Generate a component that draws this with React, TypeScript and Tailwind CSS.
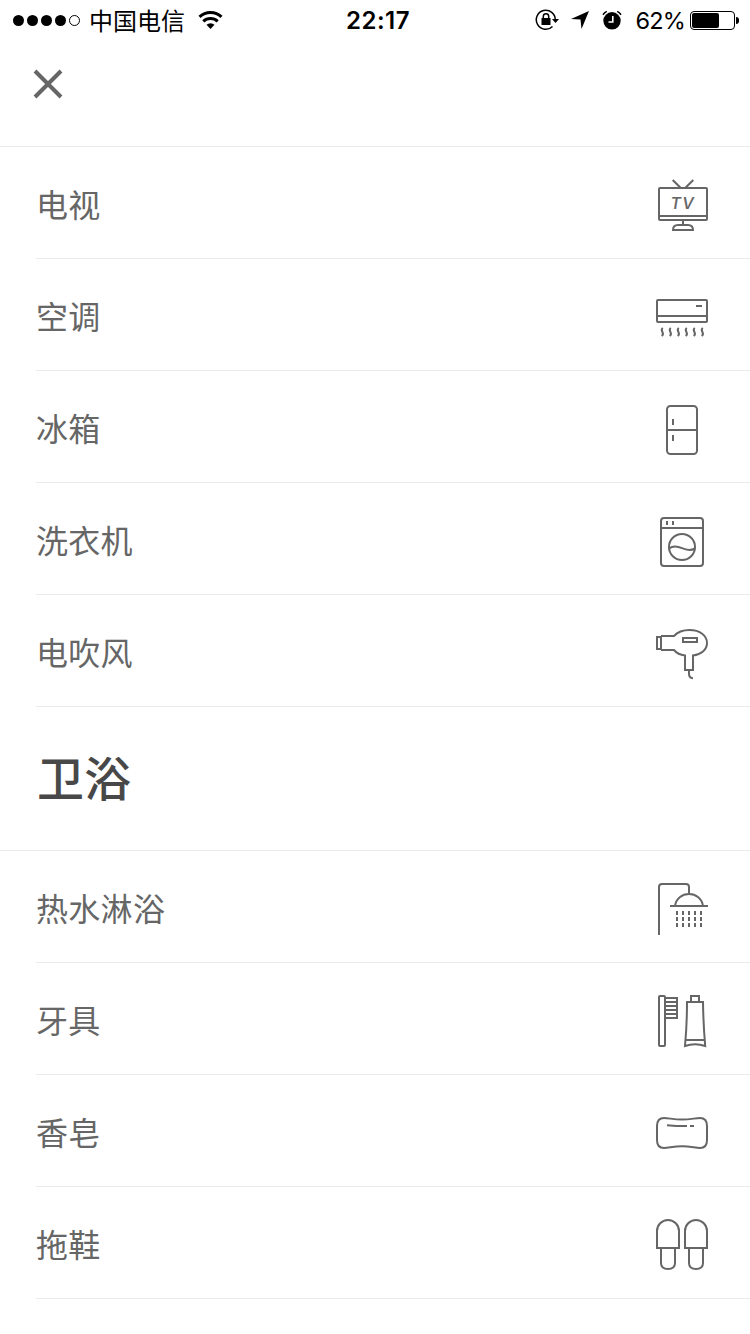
import React from 'react';

type Item = { label: string; icon: React.ReactNode };

const TvIcon = () => (
  <>
    <path d="M20.700 8l8.100 8M41.300 8l-8.100 8" />
    <rect x="7" y="16" width="48" height="32" rx="1" />
    <path d="M7 44h48M31 48v5" />
    <path d="M21 58c0-3 2-5 5-5h10c3 0 5 2 5 5z" />
    <text x="18.600" y="37" fontSize="16" fontStyle="italic" fontWeight="500" letterSpacing="1.300" fill="#666" stroke="#666" strokeWidth="0.200">
      TV
    </text>
  </>
);

const AirConditionerIcon = () => (
  <>
    <rect x="5" y="16" width="50" height="22" rx="1" />
    <path d="M5 32h50M44 22h6" />
    {[10, 18, 26, 34, 42, 50].map((x) => (
      <path key={x} d={`M${x + 0.8} 44c-1.400 1-1.300 2.400-.4 4s.7 3-.7 4`} />
    ))}
  </>
);

const FridgeIcon = () => (
  <>
    <rect x="15" y="10" width="30" height="48" rx="3.500" />
    <path d="M15 34h30M21 23v6M21 39v6" />
  </>
);

const WasherIcon = () => (
  <>
    <rect x="9" y="10" width="42" height="48" rx="3" />
    <path d="M9 20h42M15 13v4M21 13v4" />
    <circle cx="30" cy="39" r="13" />
    <path d="M17 40.500c4-3 8-2.500 13-.3s9 2.400 13 .3" />
  </>
);

const HairDryerIcon = () => (
  <>
    <rect x="5" y="17" width="4" height="12" />
    <path d="M9 16h13c4-4.500 9-6 15.500-6C48 10 55 15.500 55 23c0 7-6 11.500-14 12.500V50h-8V35.500c-4.500-.6-8.500-2.500-11-5.500H9" />
    <rect x="31" y="18" width="14" height="4" />
    <path d="M37 50v4c0 3 1.500 4 4 4.200" />
  </>
);

const ShowerIcon = () => (
  <>
    <path d="M7 59V11c0-2 1-3 3-3h24c2 0 3 1 3 3v7" />
    <path d="M23 30c1-7.500 7-12 14-12s13 4.500 14 12M18 30h38" />
    {[25, 31, 37, 43, 49].map((x) => (
      <path key={x} d={`M${x} 35v4m0 2v4m0 2v4`} />
    ))}
  </>
);

const ToothbrushIcon = () => (
  <>
    <rect x="7" y="8" width="6" height="50" rx="1" />
    <path d="M13 10h12v20H13M13 14h12M13 18h12M13 22h12M13 26h12" />
    <path d="M39 14V8h8v6" />
    <path d="M35 14h16c.2 16 1 30 2.200 44-6-2-14.400-2-20.200 0 1.300-14 2-28 2-44zM34 52h18" />
  </>
);

const SoapIcon = () => (
  <>
    <path d="M5 26c0-5 2.500-8 7-8 5 0 9 1.600 18 1.600S43 18 48 18c4.500 0 7 3 7 8v14c0 5-2.500 8-7 8-5 0-9-1.800-18-1.800S17 48 12 48c-4.500 0-7-3-7-8z" />
    <path d="M15 25.200c7 .7 12 .9 20 .9M38 26h4" />
  </>
);

const SlippersIcon = () => (
  <>
    <path d="M5 36V19a11 11 0 0 1 22 0v17z" />
    <path d="M9 36v15c0 4 3 6 7 6s7-2 7-6V36" />
    <path d="M33 36V19a11 11 0 0 1 22 0v17z" />
    <path d="M37 36v15c0 4 3 6 7 6s7-2 7-6V36" />
  </>
);

const appliances: Item[] = [
  { label: '电视', icon: <TvIcon /> },
  { label: '空调', icon: <AirConditionerIcon /> },
  { label: '冰箱', icon: <FridgeIcon /> },
  { label: '洗衣机', icon: <WasherIcon /> },
  { label: '电吹风', icon: <HairDryerIcon /> },
];

const bathroom: Item[] = [
  { label: '热水淋浴', icon: <ShowerIcon /> },
  { label: '牙具', icon: <ToothbrushIcon /> },
  { label: '香皂', icon: <SoapIcon /> },
  { label: '拖鞋', icon: <SlippersIcon /> },
];

function StatusBar() {
  return (
    <div className="flex h-10 items-center pl-[13px] pr-[11px] text-2xl leading-10 text-black">
      <div className="flex flex-1 items-center">
        <div className="flex gap-[3px]">
          {[0, 1, 2, 3].map((i) => (
            <span key={i} className="size-[11px] rounded-full bg-black" />
          ))}
          <span className="size-[11px] rounded-full border border-black" />
        </div>
        <span className="ml-[9px] pb-px">中国电信</span>
        <svg className="ml-[13px]" width="25" height="20" viewBox="0 0 25 20" fill="none" stroke="#000" strokeWidth="3">
          <path d="M1.500 6.800a16 16 0 0 1 22 0" />
          <path d="M5.300 11.300a10.500 10.500 0 0 1 14.400 0" />
          <path d="M12.500 19l-4-4.200a6 6 0 0 1 8 0z" fill="#000" stroke="none" />
        </svg>
      </div>
      <span className="ml-1 pt-0.5 font-[Inter] font-semibold tracking-[0.500px]">22:17</span>
      <div className="flex flex-1 items-center justify-end">
        <svg width="24" height="22" viewBox="0 0 24 22" fill="none" stroke="#000" strokeWidth="1.500">
          <path d="M17.500 17.500A9.500 9.500 0 1 1 20.300 11" />
          <path d="M17 10h7l-3.500 4z" fill="#000" stroke="none" />
          <rect x="6.500" y="9" width="9" height="7" rx="0.500" fill="#000" stroke="none" />
          <path d="M8.300 9.500V7.500a2.700 2.700 0 0 1 5.400 0v2" />
        </svg>
        <svg className="ml-3" width="18" height="18" viewBox="0 0 18 18">
          <path d="M18 0L10.500 18l-1-9.500L0 8z" />
        </svg>
        <svg className="ml-[13px]" width="20" height="20" viewBox="0 0 20 20" fill="none">
          <circle cx="10" cy="10.800" r="8.700" fill="#000" />
          <path d="M1 4.800A10 10 0 0 1 4.800 1.400M19 4.800a10 10 0 0 0-3.800-3.400" stroke="#000" strokeWidth="1.600" />
          <path d="M10.800 6v6H6.500" stroke="#fff" strokeWidth="1.600" />
        </svg>
        <span className="ml-[13px] pt-0.5 font-[Inter] text-[23.500px] tracking-[-0.800px]">62%</span>
        <div className="ml-[5px] flex h-[19px] w-[45px] rounded-[4px] border border-black p-px">
          <div className="w-[27px] rounded-[2px] bg-black" />
        </div>
        <div className="ml-px h-[7px] w-[3px] rounded-r-full bg-black" />
      </div>
    </div>
  );
}

function AmenityList({ items }: { items: Item[] }) {
  return (
    <ul className="pl-9">
      {items.map((item) => (
        <li key={item.label} className="flex h-28 items-center justify-between border-b border-[#ebebeb] pr-[38px]">
          <span className="pt-px text-[32px] leading-[48px] tracking-[0.300px] text-[#666]">{item.label}</span>
          <svg className="h-[61px] w-[60px] font-[Inter]" viewBox="0 0 60 61" fill="none" stroke="#666" strokeWidth="2">
            {item.icon}
          </svg>
        </li>
      ))}
    </ul>
  );
}

export default function App() {
  return (
    <div className="h-[1334px] w-[750px] overflow-hidden bg-white font-['Noto_Sans_CJK_SC',sans-serif]">
      <StatusBar />
      <header className="h-[107px] border-b border-[#ebebeb] pl-[33px] pt-[29px]">
        <button className="block" aria-label="关闭">
          <svg width="30" height="30" viewBox="0 0 30 30" stroke="#666" strokeWidth="4">
            <path d="M2 2l26 26M28 2L2 28" />
          </svg>
        </button>
      </header>
      <AmenityList items={appliances} />
      <h2 className="flex h-36 items-center border-b border-[#ebebeb] pb-[5px] pl-[37px] text-[47px] font-medium text-[#484848]">
        卫浴
      </h2>
      <AmenityList items={bathroom} />
    </div>
  );
}
